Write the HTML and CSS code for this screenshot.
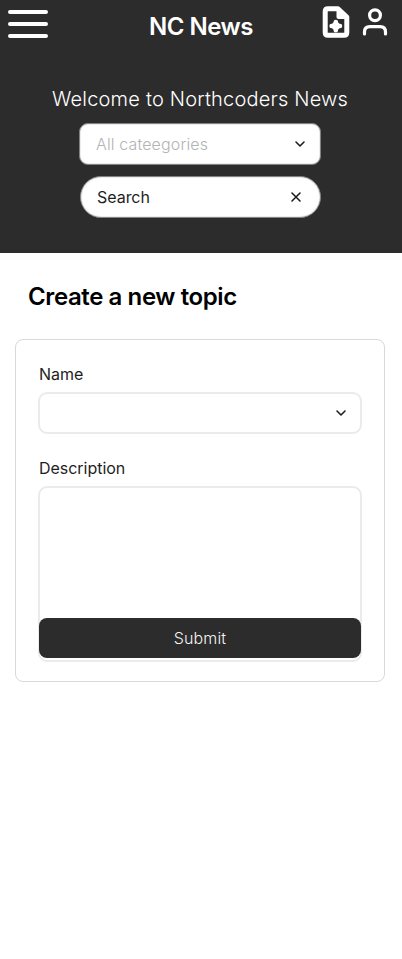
FILE: index.html
```html
<!DOCTYPE html>
<html lang="en">
<head>
<meta charset="utf-8">
<title>NC News</title>
<link rel="stylesheet" href="styles.css">
</head>
<body>
<header class="hero">
  <nav class="bar">
    <svg class="menu" width="40" height="28" viewBox="0 0 40 28" stroke="#fff" stroke-width="4" stroke-linecap="round"><path d="M2 2H38M2 14H38M2 26H38"/></svg>
    <h1 class="brand">NC News</h1>
    <div class="actions">
      <svg width="28" height="32" viewBox="0 0 28 32" fill="none" stroke="#fff" stroke-linecap="round" stroke-linejoin="round">
        <path d="M16 2.7H6Q3.2 2.7 3.2 5.5V26.5Q3.2 29.3 6 29.3H22Q24.8 29.3 24.8 26.5V11Z" stroke-width="5"/>
        <path d="M16.5 3V11H24Z" fill="#fff" stroke-width="4"/>
        <path d="M13.8 16V24.2M9.6 20H18" stroke-width="4.6"/><circle cx="13.8" cy="20" r="3" fill="#fff" stroke-width="2"/>
      </svg>
      <svg width="26" height="28" viewBox="0 0 26 28" fill="none" stroke="#fff" stroke-width="3.2" stroke-linecap="round" stroke-linejoin="round">
        <circle cx="13" cy="7.3" r="5.4"/><path d="M2.5 26V24Q2.5 18.7 7.8 18.7H18.2Q23.5 18.7 23.5 24V26"/>
      </svg>
    </div>
  </nav>
  <p class="welcome">Welcome to Northcoders News</p>
  <div class="control category"><span>All cateegories</span>
    <svg width="16" height="16" viewBox="0 0 16 16" fill="none" stroke="#1e1e1e" stroke-width="1.6" stroke-linecap="round" stroke-linejoin="round"><path d="M4 6L8 10L12 6"/></svg>
  </div>
  <div class="control search"><span>Search</span>
    <svg width="16" height="16" viewBox="0 0 16 16" fill="none" stroke="#1e1e1e" stroke-width="1.6" stroke-linecap="round"><path d="M4 4L12 12M12 4L4 12"/></svg>
  </div>
</header>
<main>
  <h2 class="heading">Create a new topic</h2>
  <form class="card">
    <div class="label name">Name</div>
    <div class="field">
      <svg width="16" height="16" viewBox="0 0 16 16" fill="none" stroke="#1e1e1e" stroke-width="1.6" stroke-linecap="round" stroke-linejoin="round"><path d="M4 6L8 10L12 6"/></svg>
    </div>
    <div class="label description">Description</div>
    <div class="area"></div>
    <button class="submit" type="button">Submit</button>
  </form>
</main>
</body>
</html>
```
FILE: styles.css
```css
* { box-sizing: border-box; }
body { margin: 0; background: #fff; color: #1e1e1e; font: 400 16px/22px Inter, sans-serif; letter-spacing: -0.03px; }
h1, h2, p { margin: 0; }
svg { display: block; flex: none; }
.hero { height: 253px; background: #2c2c2c; }
.bar { display: grid; grid-template-columns: 100px 1fr 100px; height: 53px; }
.menu { margin: 10px 0 0 8px; }
.brand { margin-top: 12px; text-align: center; color: #fff; font-size: 24px; line-height: 29px; font-weight: 600; letter-spacing: -0.5px; }
.actions { display: flex; gap: 12px; padding: 6px 0 0 20px; }
.actions svg:last-child { margin-top: 2px; }
.welcome { margin: 34px 0 0 52px; height: 36px; color: #fff; font-size: 20px; line-height: 24px; font-weight: 300; letter-spacing: 0.2px; white-space: nowrap; }
.control { display: flex; align-items: center; justify-content: space-between; height: 42px; background: #fff; border: 1px solid #828282; box-shadow: inset 0 0 0 1px #ececec; }
.category { width: 242px; margin-left: 79px; padding: 0 12px 0 16px; border-radius: 9px; color: #b3b3b3; font-weight: 300; letter-spacing: 0.13px; }
.search { width: 241px; margin: 11px 0 0 80px; padding: 0 16px; border-radius: 21px; }
.heading { margin: 29px 0 0 28px; color: #000; font-size: 24px; line-height: 29px; font-weight: 600; letter-spacing: -0.4px; }
.card { display: flex; flex-direction: column; width: 370px; height: 343px; margin: 28px 0 0 15px; padding: 0 22px; border: 1px solid #d9d9d9; border-radius: 8px; }
.label { margin-left: 1px; }
.name { margin-top: 23px; }
.field { display: flex; align-items: center; justify-content: flex-end; height: 42px; margin-top: 7px; padding-right: 11px; border: 2px solid #ebebeb; border-radius: 9px; }
.description { margin-top: 23px; }
.area { height: 176px; flex: none; margin-top: 7px; border: 2px solid #ebebeb; border-radius: 9px; }
.submit { height: 40px; flex: none; margin: -44px 1px 0; padding: 0; border: 0; border-radius: 8px; background: #2c2c2c; color: #f5f5f5; font: inherit; font-weight: 300; letter-spacing: 0.15px; }
```
